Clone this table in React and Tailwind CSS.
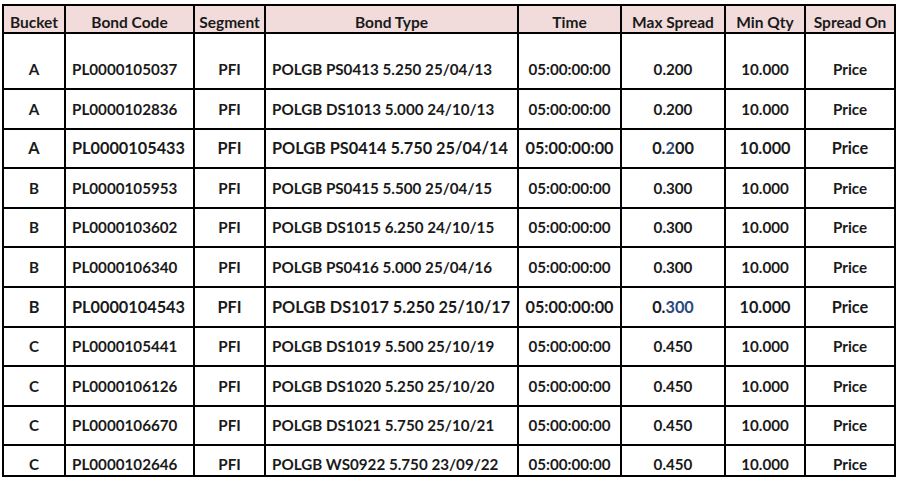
const rows = [
  ["A", "PL0000105037", "PFI", "POLGB PS0413 5.250 25/04/13", "05:00:00:00", "0.200"],
  ["A", "PL0000102836", "PFI", "POLGB DS1013 5.000 24/10/13", "05:00:00:00", "0.200"],
  ["A", "PL0000105433", "PFI", "POLGB PS0414 5.750 25/04/14", "05:00:00:00", "0.200", true],
  ["B", "PL0000105953", "PFI", "POLGB PS0415 5.500 25/04/15", "05:00:00:00", "0.300"],
  ["B", "PL0000103602", "PFI", "POLGB DS1015 6.250 24/10/15", "05:00:00:00", "0.300"],
  ["B", "PL0000106340", "PFI", "POLGB PS0416 5.000 25/04/16", "05:00:00:00", "0.300"],
  ["B", "PL0000104543", "PFI", "POLGB DS1017 5.250 25/10/17", "05:00:00:00", "0.300", true],
  ["C", "PL0000105441", "PFI", "POLGB DS1019 5.500 25/10/19", "05:00:00:00", "0.450"],
  ["C", "PL0000106126", "PFI", "POLGB DS1020 5.250 25/10/20", "05:00:00:00", "0.450"],
  ["C", "PL0000106670", "PFI", "POLGB DS1021 5.750 25/10/21", "05:00:00:00", "0.450"],
  ["C", "PL0000102646", "PFI", "POLGB WS0922 5.750 23/09/22", "05:00:00:00", "0.450"],
];

const heads = ["Bucket", "Bond Code", "Segment", "Bond Type", "Time", "Max Spread", "Min Qty", "Spread On"];
const widths = ["w-[62px]", "w-[129px]", "w-[71px]", "w-[253px]", "w-[103px]", "w-[104px]", "w-[80px]", "w-[90px]"];

// the pasted rows keep a blue tail on the spread value
const Spread = ({ value, row }) => {
  if (row === 2) return <>0.<span className="text-[#2b4a7c]">2</span>00</>;
  if (row === 6) return <>0.<span className="text-[#2b4a7c]">300</span></>;
  return value;
};

export default function App() {
  return (
    <div className="w-[898px] h-[480px] overflow-hidden bg-white pl-[2px] pt-[4px] font-['Lato',sans-serif] text-[#1a1a1a]">
      <table className="table-fixed border-collapse w-[894px]">
        <colgroup>
          {widths.map((w, i) => (
            <col key={i} className={w} />
          ))}
        </colgroup>
        <thead>
          <tr className="h-[28px] bg-[#f2dcdb]">
            {heads.map((h) => (
              <th key={h} className="border-2 border-black text-[15.5px] font-bold text-center align-bottom pb-[1px] pt-0 px-0 leading-[18px]">
                {h}
              </th>
            ))}
          </tr>
        </thead>
        <tbody>
          {rows.map((r, i) => {
            const big = r[6];
            const last = i === rows.length - 1;
            const size = big ? "text-[16.3px]" : "text-[15.2px]";
            const pad = last ? "pb-[2px]" : "pb-[10px]";
            const cell = `border-2 border-black align-bottom pt-0 leading-[18px] font-bold ${pad} ${size}`;
            const h = i === 0 ? "h-[56px]" : last ? "h-[31px]" : "h-[39.6px]";
            return (
              <tr key={r[1]} className={h}>
                <td className={`${cell} text-center`}>{r[0]}</td>
                <td className={`${cell} text-left pl-[6px]`}>{r[1]}</td>
                <td className={`${cell} text-center`}>{r[2]}</td>
                <td className={`${cell} text-left pl-[6px]`}>{r[3]}</td>
                <td className={`${cell} text-center`}>{r[4]}</td>
                <td className={`${cell} text-center`}>
                  <Spread value={r[5]} row={i} />
                </td>
                <td className={`${cell} text-center`}>10.000</td>
                <td className={`${cell} text-center`}>Price</td>
              </tr>
            );
          })}
        </tbody>
      </table>
    </div>
  );
}
